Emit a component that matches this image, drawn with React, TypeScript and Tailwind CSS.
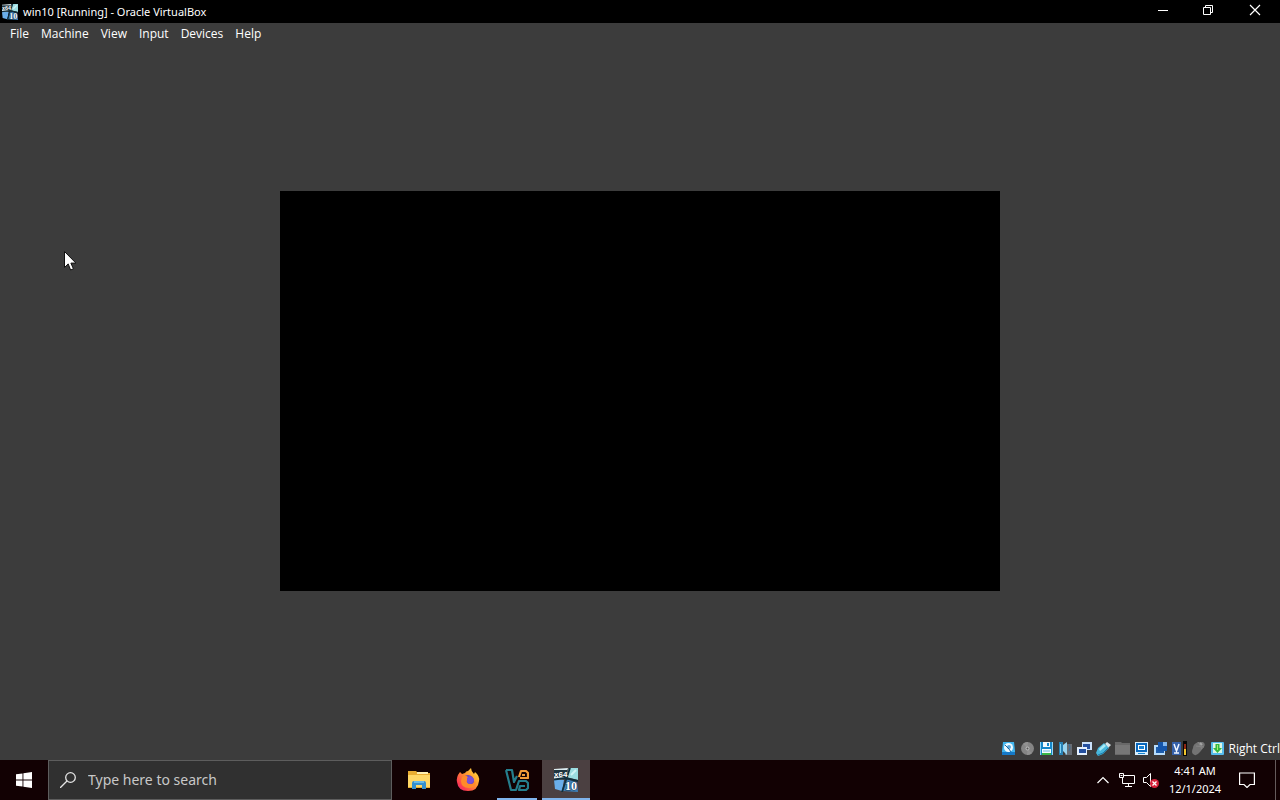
import { useState } from "react";

const MENUS = ["File", "Machine", "View", "Input", "Devices", "Help"];

function Win10Icon({ className }: { className: string }) {
  return (
    <svg className={className} viewBox="0 0 24 24">
      <path d="M0 1 14 0 10 11 0 12Z" fill="#dcebf0" />
      <path d="M15 0 24 0 24 12 12 9Z" fill="#9bdce0" />
      <path d="M0 12 10 12 8 23 1 21Z" fill="#6aaeea" />
      <path d="M12 11 23 14 24 24 9 23Z" fill="#3d7fb8" />
      <path d="M16 0 8 24M0 11.500 11 10l13 3" stroke="#12303e" strokeWidth="1.8" fill="none" />
      <path d="m17 7 5-5" stroke="#d0f4f6" strokeWidth="2" />
      <path d="M0 2h13v7H0z" fill="#20353f" />
      <text x="0" y="8.500" fontSize="8" fontWeight="700" fill="#fff" fontFamily="Liberation Sans, sans-serif">x64</text>
      <text x="11" y="22" fontSize="12" fontWeight="700" fill="#fff" stroke="#193b55" strokeWidth="1" paintOrder="stroke" fontFamily="Liberation Serif, serif">10</text>
    </svg>
  );
}

function HardDiskIcon() {
  return (
    <svg className="size-[15px]" viewBox="0 0 15 15">
      <path d="M2 1h11l1 9v4H1v-4Z" fill="#41b5ee" />
      <path d="M1 11h13v3H1z" fill="#1679c7" />
      <circle cx="7.5" cy="6.5" r="4.5" fill="#eefaff" />
      <circle cx="8" cy="6" r="2" fill="#5aa8dc" />
      <path d="m4 4 4 4 2 3" stroke="#1a639d" fill="none" />
    </svg>
  );
}

function OpticalIcon() {
  return (
    <svg className="size-[15px]" viewBox="0 0 15 15">
      <circle cx="7.5" cy="7.5" r="6.5" fill="#858585" />
      <path d="M7.5 7.5 3 2.8A6.5 6.5 0 0 1 8 1ZM7.5 7.5l4.5 4.7A6.5 6.5 0 0 1 7 14Z" fill="#919191" />
      <circle cx="7.5" cy="7.5" r="2" fill="#b8b8b8" />
      <circle cx="7.5" cy="7.5" r="1" fill="#555" />
    </svg>
  );
}

function FloppyIcon() {
  return (
    <svg className="size-[15px]" viewBox="0 0 15 15">
      <path d="M1 1h13v13H1z" fill="#1687c9" />
      <path d="M4 1h7v5H4zM3 8h9v6H3z" fill="#f3fbff" />
      <path d="M8 2h2v3H8z" fill="#1687c9" />
      <path d="M4 10h7" stroke="#6fb6e0" />
      <path d="M3 12h9v2H3z" fill="#38b548" />
      <path d="M1.5 1v13M13.5 1v13" stroke="#8fd4f5" />
    </svg>
  );
}

function AudioIcon() {
  return (
    <svg className="size-[15px]" viewBox="0 0 15 15">
      <path d="M9 3h5v11H7V6Z" fill="#686d74" />
      <path d="M1 1h4v13H1z" fill="#2781b5" />
      <path d="M5 4 9 1v13l-4-4Z" fill="#9bd5ef" />
      <path d="M2 3h1v9H2z" fill="#7ed3f5" />
      <path d="M11 3q2 3 0 7" stroke="#39719d" fill="none" />
    </svg>
  );
}

function NetworkIcon() {
  return (
    <svg className="size-[15px]" viewBox="0 0 15 15">
      <path d="M5 1h10v8H5z" fill="#cae1fa" />
      <path d="M6 3h7v5H6z" fill="#2450a0" />
      <path d="M0 6h10v8H0z" fill="#e4f1ff" />
      <path d="M2 8h7v4H2z" fill="#2450a0" />
    </svg>
  );
}

function UsbIcon() {
  return (
    <svg className="size-[15px]" viewBox="0 0 15 15">
      <path d="m9 3 2-2 4 3-3 3Z" fill="#d8e4e8" />
      <path d="m2 7 6-5 5 5-6 6-5 2-2-3Z" fill="#48b7dc" />
      <path d="m3 8 5-5 2 2-6 5Z" fill="#a4e9f5" />
      <path d="m2 14 5-2 5-5" stroke="#1b7cab" fill="none" />
    </svg>
  );
}

function FoldersIcon() {
  return (
    <svg className="size-[15px]" viewBox="0 0 15 15">
      <path d="M0 1h6l1 1h8v12H0Z" fill="#686868" />
      <path d="M0 4h15v9H0z" fill="#777" />
    </svg>
  );
}

function DisplayIcon() {
  return (
    <svg className="size-[15px]" viewBox="0 0 15 15">
      <path d="M1 1h13v13H1z" fill="#d8efff" />
      <path d="M2 2h11v9H2z" fill="#0968bd" />
      <path d="M4 4h7v5H4z" fill="#fff" />
      <path d="M5 5h5v3H5z" fill="#1983d4" />
      <path d="M4 12h7v1H4z" fill="#1684cf" />
    </svg>
  );
}

function RecordingIcon() {
  return (
    <svg className="size-[15px]" viewBox="0 0 15 15">
      <path d="M1 4h11v10H1z" fill="#b6dcfb" />
      <path d="M3 6h8v6H3z" fill="#1d5dac" />
      <path d="M5 1h9v9H5z" fill="#1556ab" />
      <path d="M10 1h4v4h-4z" fill="#82b7ed" />
    </svg>
  );
}

function CpuIcon() {
  return (
    <svg className="size-[15px]" viewBox="0 0 15 15">
      <path d="M0 1h9v13H0z" fill="#3561a9" />
      <path d="m2 3 2.500 7L7 3M2 12h5" stroke="#f0f6ff" strokeWidth="1.5" fill="none" />
      <path d="M11 0h4v15h-4z" fill="#080808" />
      <path d="M12 3h2v5h-2z" fill="#8f2613" />
      <path d="M12 8h2v6h-2z" fill="#efc52d" />
    </svg>
  );
}

function MouseIcon() {
  return (
    <svg className="size-[15px]" viewBox="0 0 15 15">
      <path d="M2 7q0-4 5-6h5q3 2 1 5l-4 5q-4 5-7 2-2-2 0-6Z" fill="#737373" />
      <path d="m7 1 4 7M5 5l8 1" stroke="#858585" fill="none" />
      <path d="m9 2 2 2" stroke="#a5a5a5" strokeWidth="2" />
    </svg>
  );
}

function KeyboardIcon() {
  return (
    <svg className="size-[15px]" viewBox="0 0 15 15">
      <rect x="1" y="1" width="13" height="13" rx="1" fill="#55bbed" />
      <path d="M3 2h9v10H3z" fill="#dcf8e6" />
      <path d="M5.5 3h4v4H12l-4.5 5L3 7h2.5Z" fill="#34b83e" />
      <path d="M7 4h1v5H7z" fill="#a5ed72" />
    </svg>
  );
}

const INDICATORS = [
  { name: "Hard disks", Icon: HardDiskIcon },
  { name: "Optical drives", Icon: OpticalIcon },
  { name: "Floppy drives", Icon: FloppyIcon },
  { name: "Audio", Icon: AudioIcon },
  { name: "Network", Icon: NetworkIcon },
  { name: "USB devices", Icon: UsbIcon },
  { name: "Shared folders", Icon: FoldersIcon },
  { name: "Display", Icon: DisplayIcon },
  { name: "Recording", Icon: RecordingIcon },
  { name: "Processor", Icon: CpuIcon },
  { name: "Mouse integration", Icon: MouseIcon },
  { name: "Keyboard capture", Icon: KeyboardIcon },
];

function TitleBar() {
  return (
    <header className="flex h-[23px] items-center bg-black pl-0.5">
      <Win10Icon className="size-4" />
      <h1 className="flex-1 pl-[5px] text-[11px] leading-4">win10 [Running] - Oracle VirtualBox</h1>
      <button aria-label="Minimize" className="flex h-full w-[46px] items-center justify-center pb-1">
        <svg className="size-3" viewBox="0 0 12 12" stroke="#fff"><path d="M1 6.5h10" /></svg>
      </button>
      <button aria-label="Restore" className="flex h-full w-11 items-center justify-center pb-1">
        <svg className="size-3" viewBox="0 0 12 12" fill="none" stroke="#fff">
          <path d="M1.5 3.5h7v7h-7zM3.5 3V1.5h7v7H9" />
        </svg>
      </button>
      <button aria-label="Close" className="flex h-full w-[50px] items-center justify-center pb-1">
        <svg className="size-3" viewBox="0 0 12 12" fill="none" stroke="#fff" strokeWidth="1.2">
          <path d="m1 1 10 10M11 1 1 11" />
        </svg>
      </button>
    </header>
  );
}

function StartIcon() {
  return (
    <svg className="size-4" viewBox="0 0 16 16" fill="#fff">
      <path d="M0 2.3 6.5 1.4v6.2H0zM7.4 1.3 16 0v7.6H7.4zM0 8.4h6.5v6.2L0 13.7zM7.4 8.4H16V16l-8.6-1.3z" />
    </svg>
  );
}

function ExplorerIcon() {
  return (
    <svg className="h-5 w-6" viewBox="0 0 24 20">
      <path d="M1 1h8l2 2h12v15H1Z" fill="#e9ad32" />
      <path d="M1 5h22v12H1z" fill="#ffd766" />
      <path d="M10 2h11v2H10z" fill="#fff0b1" />
      <path d="M5 19v-6q0-2 2-2h10q2 0 2 2v6h-4v-4H9v4Z" fill="#348fce" />
      <path d="M7 11h10v2H7z" fill="#67b9e8" />
    </svg>
  );
}

function FirefoxIcon() {
  return (
    <svg className="size-6" viewBox="0 0 24 24">
      <defs>
        <linearGradient id="flame" x1="1" y1="0" x2="0" y2="1">
          <stop offset="0" stopColor="#ffed45" />
          <stop offset=".45" stopColor="#ff922e" />
          <stop offset=".8" stopColor="#fc3951" />
          <stop offset="1" stopColor="#d02b91" />
        </linearGradient>
      </defs>
      <path d="M4 4 6 6l3-1q1-2 3-2l3-3q0 3 3 6l1-2q5 4 4 9-1 10-11 10Q2 23 1 14 0 9 4 4Z" fill="url(#flame)" />
      <circle cx="12" cy="13" r="6" fill="#6846bd" />
      <path d="M6 9q3-3 6 0l3 1-4 2q-1 4 4 4 3 0 4-4 2 8-6 8-8 0-8-7Z" fill="#ff8a2a" />
      <path d="M11 10q3-4 7 1 0 4-4 5-4-1-3-4Z" fill="#7950d6" />
    </svg>
  );
}

function VirtualBoxIcon() {
  return (
    <svg className="size-6" viewBox="0 0 24 24" fill="none" strokeWidth="2.2">
      <path d="M1 2h6l2 12 3-6M1 2l5 20h5l3-9h7l2 2v5l-2 2h-7l1-4h5" stroke="#257e8d" strokeLinejoin="round" />
      <path d="M14 9l2-6h5l2 2v5h-8M17 7h3" stroke="#f29b38" strokeLinejoin="round" />
    </svg>
  );
}

function Taskbar() {
  const [query, setQuery] = useState("");

  return (
    <footer className="flex h-10 items-stretch bg-[#120103]">
      <button aria-label="Start" className="flex w-12 items-center justify-center"><StartIcon /></button>
      <label className="flex w-[344px] items-center gap-3 border border-[#5d5d5d] bg-[#303030] pl-[11px]">
        <svg className="size-4 shrink-0" viewBox="0 0 16 16" fill="none" stroke="#e4e4e4" strokeWidth="1.3">
          <circle cx="10.5" cy="5.5" r="4.8" />
          <path d="M7 9 0 16" />
        </svg>
        <input
          type="text"
          aria-label="Search"
          placeholder="Type here to search"
          value={query}
          onChange={e => setQuery(e.target.value)}
          className="min-w-0 flex-1 bg-transparent text-[14px] leading-5 text-white outline-none placeholder:text-[#c8c8c8]"
        />
      </label>
      <nav aria-label="Taskbar" className="flex gap-px pl-[3px]">
        <button aria-label="File Explorer" className="flex w-12 items-center justify-center"><ExplorerIcon /></button>
        <button aria-label="Firefox" className="flex w-12 items-center justify-center"><FirefoxIcon /></button>
        <button aria-label="Oracle VirtualBox" className="flex w-12 flex-col items-center justify-between pt-2">
          <VirtualBoxIcon />
          <span className="h-0.5 w-10 bg-[#80b4ec]" />
        </button>
        <button aria-label="win10" className="flex w-12 flex-col items-center justify-between bg-[#4b4041] pt-2">
          <Win10Icon className="size-6" />
          <span className="h-0.5 w-12 bg-[#80b4ec]" />
        </button>
      </nav>
      <div className="ml-auto flex items-stretch">
        <button aria-label="Show hidden icons" className="flex w-6 items-center justify-center">
          <svg className="size-3" viewBox="0 0 12 12" fill="none" stroke="#fff" strokeWidth="1.2"><path d="m.5 9 5.5-5.5L11.5 9" /></svg>
        </button>
        <button aria-label="Network" className="flex w-6 items-center justify-center">
          <svg className="size-4" viewBox="0 0 16 16" fill="none" stroke="#fff">
            <path d="M5 3.5h10.5v8H3.5V6M9.5 12v2.5M6 14.5h7M.5 1.5h4v4h-4zM1.5 3.5h2" />
          </svg>
        </button>
        <button aria-label="Volume muted" className="flex w-6 items-center justify-center">
          <svg className="size-4" viewBox="0 0 16 16" fill="none" stroke="#fff">
            <path d="M.5 5.5h3l4-4v13l-4-4h-3z" />
            <circle cx="11.5" cy="11.5" r="4.5" fill="#d51f38" stroke="none" />
            <path d="m9.5 9.5 4 4m0-4-4 4" strokeWidth="1.3" />
          </svg>
        </button>
        <button className="flex w-16 flex-col items-center justify-center text-[11px] leading-[18px]">
          <span>4:41 AM</span>
          <span>12/1/2024</span>
        </button>
        <button aria-label="Notifications" className="flex w-12 items-center justify-center pr-2">
          <svg className="size-4" viewBox="0 0 16 16" fill="none" stroke="#fff" strokeWidth="1.2">
            <path d="M.6 1h14.8v11.5H11l-3 3-3-3H.6z" />
          </svg>
        </button>
        <button aria-label="Show desktop" className="w-[5px] border-l border-[#655b5c]" />
      </div>
    </footer>
  );
}

export default function App() {
  return (
    <div className="relative flex min-h-screen flex-col bg-[#3c3c3c] font-['Noto_Sans','Open_Sans',sans-serif] text-white">
      <TitleBar />
      <nav aria-label="Menu bar" className="flex h-[22px] items-center pl-1 font-['Open_Sans','Noto_Sans',sans-serif] text-[12px] leading-4">
        {MENUS.map(m => (
          <button key={m} className="px-1.5">{m}</button>
        ))}
      </nav>
      <main className="flex flex-1 items-center justify-center">
        <div className="aspect-[9/5] w-[56.25%] bg-black" />
      </main>
      <div className="flex h-[23px] items-center justify-end gap-1">
        <div className="flex gap-1">
          {INDICATORS.map(({ name, Icon }) => (
            <button key={name} aria-label={name}><Icon /></button>
          ))}
        </div>
        <span className="whitespace-nowrap font-['Open_Sans','Noto_Sans',sans-serif] text-[12px] leading-4">Right Ctrl</span>
      </div>
      <Taskbar />
      <svg className="pointer-events-none absolute left-16 top-[251px] h-5 w-3" viewBox="0 0 12 20">
        <path d="M.5.5v16l3.7-3.6L6.6 19l2.8-1.2-2.5-5.7h5Z" fill="#fff" stroke="#111" />
      </svg>
    </div>
  );
}
